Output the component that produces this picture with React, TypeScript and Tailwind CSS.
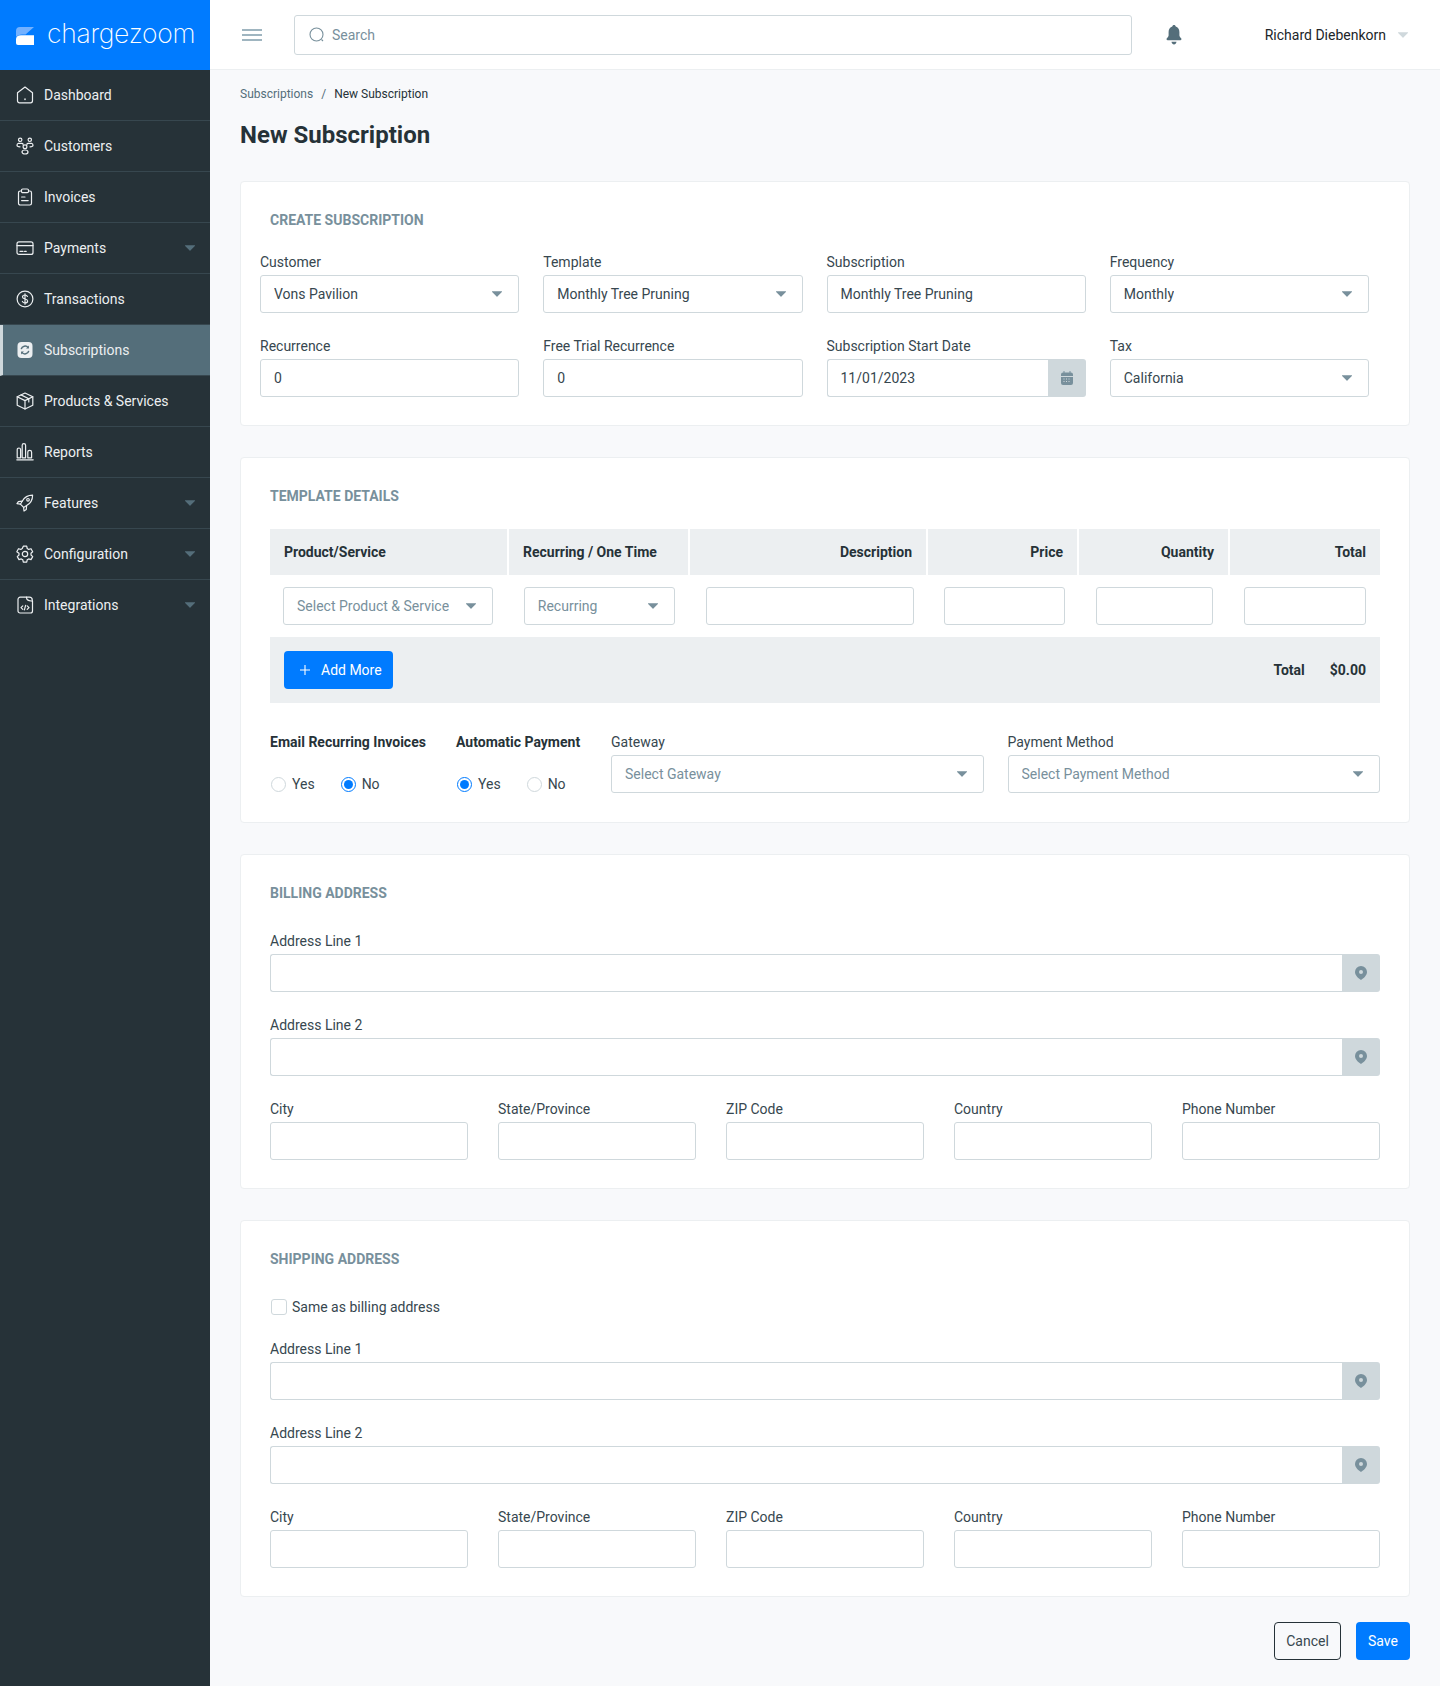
import React from "react";

const Caret = ({ className = "" }: { className?: string }) => (
  <svg viewBox="0 0 10 6" className={`w-[10px] h-[6px] shrink-0 ${className}`} fill="currentColor">
    <path d="M0.4 0.3h9.2c.4 0 .5.4.3.7L5.4 5.6c-.2.3-.6.3-.8 0L.1 1C-.1.7 0 .3.4.3z" />
  </svg>
);

const I = ({ children }: { children: React.ReactNode }) => (
  <svg viewBox="0 0 18 18" className="w-[18px] h-[18px] shrink-0" fill="none" stroke="currentColor" strokeWidth="1.2" strokeLinecap="round" strokeLinejoin="round">
    {children}
  </svg>
);

const icons: Record<string, React.ReactNode> = {
  dashboard: (
    <I>
      <path d="M1.5 6.8 9 1l7.500 5.800v8a2 2 0 0 1-2 2h-11a2 2 0 0 1-2-2z" />
      <path d="M9 13v.6" strokeWidth="1.5" />
    </I>
  ),
  customers: (
    <I>
      <circle cx="4.200" cy="2.800" r="1.700" />
      <circle cx="13.800" cy="2.800" r="1.700" />
      <circle cx="9" cy="9.800" r="1.900" />
      <path d="M2.400 6.300H6c.9 0 1.400.8 1 1.500M15.600 6.300H12c-.9 0-1.400.8-1 1.500M2.400 6.300C1.400 6.700 1 7.600 1 8.300c0 1 1.200 1.500 3 1.500M15.600 6.300c1 .4 1.400 1.300 1.400 2 0 1-1.200 1.500-3 1.500" />
      <ellipse cx="9" cy="15" rx="3" ry="2" />
    </I>
  ),
  invoices: (
    <I>
      <path d="M5.500 3H4.200a1.700 1.700 0 0 0-1.700 1.700v10.600A1.700 1.700 0 0 0 4.200 17h9.600a1.700 1.700 0 0 0 1.700-1.700V4.700A1.700 1.700 0 0 0 13.800 3h-1.300" />
      <rect x="5.500" y="1" width="7" height="3.600" rx="1.200" />
      <path d="M5.600 9h3.400M5.600 12.600h6.600" />
    </I>
  ),
  payments: (
    <I>
      <rect x="1" y="2.800" width="16" height="12.600" rx="2" />
      <path d="M1 6.600h16M4 12.400h3M8.600 12.400h1.600" />
    </I>
  ),
  transactions: (
    <I>
      <circle cx="9" cy="9" r="7.900" />
      <path d="M11.400 6.500C11 5.500 10 5 9 5c-1.400 0-2.500.8-2.500 2S7.600 8.700 9 9s2.600.8 2.600 2-1.200 2-2.600 2c-1.100 0-2.100-.5-2.600-1.500M9 3.800v10.400" />
    </I>
  ),
  subscriptions: (
    <svg viewBox="0 0 18 18" className="w-[18px] h-[18px] shrink-0">
      <rect x="1.500" y="1" width="15" height="16" rx="4" fill="currentColor" />
      <path d="M5.200 8.200A4 4 0 0 1 12.200 6.600M12.800 9.800a4 4 0 0 1-7 1.600" fill="none" stroke="#546e7a" strokeWidth="1.500" />
      <path d="M12.900 4.600v2.800h-2.800zM5.100 13.400v-2.800h2.800z" fill="#546e7a" />
    </svg>
  ),
  products: (
    <I>
      <path d="M9 1 16.800 4.800v8.400L9 17l-7.800-3.800V4.800z" />
      <path d="M1.200 4.800 9 8.600l7.800-3.800M9 8.600V17M5 2.900l7.800 3.800V10" />
    </I>
  ),
  reports: (
    <I>
      <path d="M.8 16.800h16.400" />
      <path d="M1.200 14.800V6.700a1.700 1.700 0 0 1 3.400 0v8.100zM6.200 14.800V2.300a1.700 1.700 0 0 1 3.400 0v12.500zM11.800 14.800V9.300a1.900 1.900 0 0 1 3.800 0v5.500z" />
    </I>
  ),
  features: (
    <I>
      <path d="M6.200 7.200C8.500 3.200 12 1.200 16.600 1.200c0 4.600-2 8.100-6 10.400l-3 1.800-3.200-3.200z" />
      <circle cx="12" cy="5.800" r="1.300" />
      <path d="M6.200 7.200 2.400 7.600 1 9.600l3.400.6M10.600 11.600l-.3 3.900L8 17l-.4-3.600" />
    </I>
  ),
  configuration: (
    <I>
      <path d="M7.300 1.200h3.400l.5 2.300 1.500.9 2.300-.7 1.700 3-1.700 1.600v1.700l1.700 1.600-1.700 3-2.300-.7-1.500.9-.5 2.300H7.300l-.5-2.300-1.500-.9-2.300.7-1.700-3 1.700-1.600V8.300L.8 6.700l1.700-3 2.300.7 1.500-.9z" />
      <circle cx="9" cy="9" r="2.700" />
    </I>
  ),
  integrations: (
    <I>
      <path d="M4.200 1.200h6.300c0 1.800.9 3.800 4.800 3.800h1.200v10a2 2 0 0 1-2 2H4a2 2 0 0 1-2-2V3.400a2.200 2.200 0 0 1 2.200-2.200z" />
      <path d="M10.500 1.200h2.800a3 3 0 0 1 3 3V5M6.800 9.800 5 11.600l1.800 1.800M11.200 9.800l1.800 1.800-1.800 1.800M9.600 9.400l-1.200 4.400" />
    </I>
  ),
};

const navItems: [string, string, boolean][] = [
  ["Dashboard", "dashboard", false],
  ["Customers", "customers", false],
  ["Invoices", "invoices", false],
  ["Payments", "payments", true],
  ["Transactions", "transactions", false],
  ["Subscriptions", "subscriptions", false],
  ["Products & Services", "products", false],
  ["Reports", "reports", false],
  ["Features", "features", true],
  ["Configuration", "configuration", true],
  ["Integrations", "integrations", true],
];

const Sidebar = () => (
  <aside className="w-[210px] shrink-0 bg-[#263238]">
    <div className="h-[70px] bg-[#007bff] flex items-center pl-4 gap-[13px]">
      <svg viewBox="0 0 18 18" className="w-[18px] h-[18px] mt-[1px] shrink-0">
        <path d="M0 10V4a4 4 0 0 1 4-4h14L9.500 7.500H6C3.500 7.500 1.200 8.500 0 10z" fill="#73b1ff" />
        <path d="M0 12c0-2 2-3.700 5-3.700h13V18H2a2 2 0 0 1-2-2z" fill="#fff" />
      </svg>
      <span className="font-['Inter',sans-serif] font-extralight text-white text-[26.500px] leading-none tracking-[-0.3px] -mt-[3px]">chargezoom</span>
    </div>
    <nav>
      {navItems.map(([label, icon, caret]) => {
        const active = label === "Subscriptions";
        return (
          <div
            key={label}
            className={
              active
                ? "h-[51px] flex items-center pl-[13px] pr-[15px] gap-[10px] bg-[#546e7a] border-l-[3px] border-[#cfd8dc] text-[#eceff1] text-sm border-b border-b-[#37474f]"
                : "h-[51px] flex items-center pl-4 pr-[15px] gap-[10px] border-b border-[#37474f] text-[#eceff1] text-sm last:border-b-transparent"
            }
          >
            {icons[icon]}
            <span className="flex-1">{label}</span>
            {caret && <Caret className="text-[#546e7a] w-[8px]" />}
          </div>
        );
      })}
    </nav>
  </aside>
);

const Header = () => (
  <header className="h-[70px] bg-white border-b border-[#eceff1] flex items-center pl-[32px] pr-[32px]">
    <div className="w-[20px] flex flex-col gap-[3px] shrink-0">
      <span className="h-[2px] bg-[#9fb5c0] block" />
      <span className="h-[2px] bg-[#9fb5c0] block" />
      <span className="h-[2px] bg-[#9fb5c0] block" />
    </div>
    <div className="ml-[32px] w-[838px] h-[40px] border border-[#cfd8dc] rounded-[3px] flex items-center pl-[14px] gap-[7px] text-sm text-[#78909c]">
      <svg viewBox="0 0 16 16" className="w-[16px] h-[16px]" fill="none" stroke="#78909c" strokeWidth="1.100">
        <circle cx="7.500" cy="7.500" r="6.500" />
        <path d="m12.500 12.500 1.500 1.500" />
      </svg>
      <span>Search</span>
    </div>
    <svg viewBox="0 0 16 20" className="w-[16px] h-[20px] ml-[34px]" fill="#546e7a">
      <path d="M8 0c1 0 1.600.700 1.700 1.600C12 2.300 13.400 4.300 13.400 7v3.300c0 1.200.700 2 1.700 3 .700.700.4 2-.8 2H1.700c-1.200 0-1.500-1.300-.8-2 1-1 1.700-1.800 1.700-3V7c0-2.700 1.400-4.700 3.700-5.400C6.400.7 7 0 8 0z" />
      <path d="M5.500 16.800h5C10.200 18.600 9.200 19.600 8 19.600s-2.200-1-2.500-2.800z" />
    </svg>
    <span className="ml-auto text-sm text-[#212529]">Richard Diebenkorn</span>
    <Caret className="ml-[12px] text-[#cfd8dc] w-[8px]" />
  </header>
);

const Card = ({ title, children, className = "" }: { title: string; children: React.ReactNode; className?: string }) => (
  <section className={`bg-white border border-[#eceff1] rounded-[4px] pt-[28px] px-[29px] pb-[28px] ${className}`}>
    <h2 className="text-sm leading-5 font-bold text-[#78909c] uppercase">{title}</h2>
    {children}
  </section>
);

const Field = ({ label, children }: { label: string; children: React.ReactNode }) => (
  <div className="min-w-0">
    <div className="text-sm leading-5 mb-[3px] text-[#37474f]">{label}</div>
    {children}
  </div>
);

const Box = ({ children, className = "" }: { children?: React.ReactNode; className?: string }) => (
  <div className={`h-[38px] bg-white border border-[#cfd8dc] rounded-[3px] flex items-center px-[13px] text-sm text-[#37474f] ${className}`}>{children}</div>
);

const Select = ({ text, placeholder, className = "" }: { text: string; placeholder?: boolean; className?: string }) => (
  <Box className={`justify-between pr-[16px] ${placeholder ? "text-[#78909c]" : ""} ${className}`}>
    <span className="truncate">{text}</span>
    <Caret className="text-[#78909c]" />
  </Box>
);

const Pin = () => (
  <svg viewBox="0 0 12 14" className="w-[12px] h-[14px]">
    <path fillRule="evenodd" fill="#78909c" d="M6 0a6 6 0 0 1 6 6c0 3.200-3.500 6.500-6 8-2.500-1.500-6-4.800-6-8a6 6 0 0 1 6-6zm0 4a2 2 0 1 0 0 4 2 2 0 0 0 0-4z" />
  </svg>
);

const AddressInput = () => (
  <div className="flex h-[38px]">
    <div className="flex-1 border border-r-0 border-[#cfd8dc] rounded-l-[3px] bg-white" />
    <div className="w-[38px] bg-[#cfd8dc] rounded-r-[3px] flex items-center justify-center">
      <Pin />
    </div>
  </div>
);

const Address = () => (
  <div className="flex flex-col gap-[23px]">
    <Field label="Address Line 1"><AddressInput /></Field>
    <Field label="Address Line 2"><AddressInput /></Field>
    <div className="grid grid-cols-5 gap-x-[30px]">
      {["City", "State/Province", "ZIP Code", "Country", "Phone Number"].map((l) => (
        <Field key={l} label={l}><Box /></Field>
      ))}
    </div>
  </div>
);

const Radio = ({ label, on }: { label: string; on?: boolean }) => (
  <div className="flex items-center gap-[6px] text-sm leading-5 text-[#37474f]">
    <span className={`w-[15px] h-[15px] rounded-full bg-white flex items-center justify-center border ${on ? "border-[#007bff]" : "border-[#cfd8dc]"}`}>
      {on && <span className="w-[9px] h-[9px] rounded-full bg-[#007bff]" />}
    </span>
    {label}
  </div>
);

const Th = ({ children, className = "" }: { children: React.ReactNode; className?: string }) => (
  <div className={`bg-[#eceff1] flex items-center px-[14px] text-sm font-bold text-[#263238] ${className}`}>{children}</div>
);

export default function App() {
  return (
    <div className="flex min-h-screen bg-[#f8f9fb] font-['Roboto',sans-serif]">
      <Sidebar />
      <div className="flex-1 min-w-0">
        <Header />
        <main className="px-[30px] pb-[27px]">
          <div className="pt-[15px] text-xs leading-[18px] text-[#546e7a] flex gap-[8px]">
            <span>Subscriptions</span>
            <span>/</span>
            <span className="text-[#263238]">New Subscription</span>
          </div>
          <h1 className="mt-[16px] text-2xl leading-[32px] font-bold text-[#263238]">New Subscription</h1>

          <Card title="Create Subscription" className="mt-[30px]">
            <div className="mt-[22px] -ml-[10px] mr-[11px] grid grid-cols-4 gap-x-[24px] gap-y-[23px]">
              <Field label="Customer"><Select text="Vons Pavilion" /></Field>
              <Field label="Template"><Select text="Monthly Tree Pruning" /></Field>
              <Field label="Subscription"><Box>Monthly Tree Pruning</Box></Field>
              <Field label="Frequency"><Select text="Monthly" /></Field>
              <Field label="Recurrence"><Box>0</Box></Field>
              <Field label="Free Trial Recurrence"><Box>0</Box></Field>
              <Field label="Subscription Start Date">
                <div className="flex h-[38px]">
                  <div className="flex-1 border border-r-0 border-[#cfd8dc] rounded-l-[3px] flex items-center px-[13px] text-sm text-[#37474f]">11/01/2023</div>
                  <div className="w-[38px] bg-[#cfd8dc] rounded-r-[3px] flex items-center justify-center">
                    <svg viewBox="0 0 12 14" className="w-[12px] h-[14px]" fill="#78909c">
                      <path d="M2.500 0h1v1.500h5V0h1v1.500H10A2 2 0 0 1 12 3.500V5H0V3.500a2 2 0 0 1 2-2h.5z" />
                      <path fillRule="evenodd" d="M0 6h12v6a2 2 0 0 1-2 2H2a2 2 0 0 1-2-2zm2.500 1.500v1h1v-1zm2.500 0v1h1v-1zm2.500 0v1h1v-1zm-5 2.500v1h1v-1zm2.500 0v1h1v-1zm2.500 0v1h1v-1z" />
                    </svg>
                  </div>
                </div>
              </Field>
              <Field label="Tax"><Select text="California" /></Field>
            </div>
          </Card>

          <Card title="Template Details" className="mt-[31px]">
            <div className="mt-[23px]">
              <div className="grid grid-cols-[237px_179px_236px_149px_149px_150px] gap-x-[2px] h-[46px]">
                <Th>Product/Service</Th>
                <Th>Recurring / One Time</Th>
                <Th className="justify-end">Description</Th>
                <Th className="justify-end">Price</Th>
                <Th className="justify-end">Quantity</Th>
                <Th className="justify-end">Total</Th>
              </div>
              <div className="flex py-[12px] pl-[13px] pr-[14px] justify-between">
                <Select text="Select Product & Service" placeholder className="w-[210px]" />
                <Select text="Recurring" placeholder className="w-[151px]" />
                <Box className="w-[208px]" />
                <Box className="w-[121px]" />
                <Box className="w-[117px]" />
                <Box className="w-[122px]" />
              </div>
              <div className="h-[66px] bg-[#eceff1] flex items-center px-[14px] text-sm font-bold text-[#263238]">
                <div className="h-[38px] w-[109px] bg-[#007bff] rounded-[4px] flex items-center pl-[15px] gap-[10px] text-white font-normal">
                  <svg viewBox="0 0 12 12" className="w-[12px] h-[12px]" fill="none" stroke="currentColor" strokeWidth="1.100">
                    <path d="M6 1v10M1 6h10" />
                  </svg>
                  Add More
                </div>
                <span className="ml-auto">Total</span>
                <span className="ml-[25px]">$0.00</span>
              </div>
            </div>
            <div className="mt-[29px] flex items-start">
              <div className="w-[186px]">
                <div className="text-sm leading-5 font-bold text-[#263238]">Email Recurring Invoices</div>
                <div className="mt-[22px] pl-[1px] flex gap-[26px]">
                  <Radio label="Yes" />
                  <Radio label="No" on />
                </div>
              </div>
              <div className="w-[155px]">
                <div className="text-sm leading-5 font-bold text-[#263238]">Automatic Payment</div>
                <div className="mt-[22px] pl-[1px] flex gap-[26px]">
                  <Radio label="Yes" on />
                  <Radio label="No" />
                </div>
              </div>
              <div className="flex-1 grid grid-cols-2 gap-x-[24px]">
                <Field label="Gateway"><Select text="Select Gateway" placeholder /></Field>
                <Field label="Payment Method"><Select text="Select Payment Method" placeholder /></Field>
              </div>
            </div>
          </Card>

          <Card title="Billing Address" className="mt-[31px]">
            <div className="mt-[28px]"><Address /></div>
          </Card>

          <Card title="Shipping Address" className="mt-[31px]">
            <div className="mt-[28px] flex items-center gap-[5px] text-sm leading-5 text-[#37474f]">
              <span className="w-[16px] h-[16px] ml-[1px] border border-[#cfd8dc] rounded-[3px] bg-white" />
              Same as billing address
            </div>
            <div className="mt-[22px]"><Address /></div>
          </Card>

          <div className="mt-[25px] flex justify-end gap-[15px] text-sm">
            <div className="h-[38px] w-[67px] border border-[#263238] rounded-[4px] flex items-center justify-center text-[#37474f]">Cancel</div>
            <div className="h-[38px] w-[54px] bg-[#007bff] rounded-[4px] flex items-center justify-center text-white">Save</div>
          </div>
        </main>
      </div>
    </div>
  );
}
